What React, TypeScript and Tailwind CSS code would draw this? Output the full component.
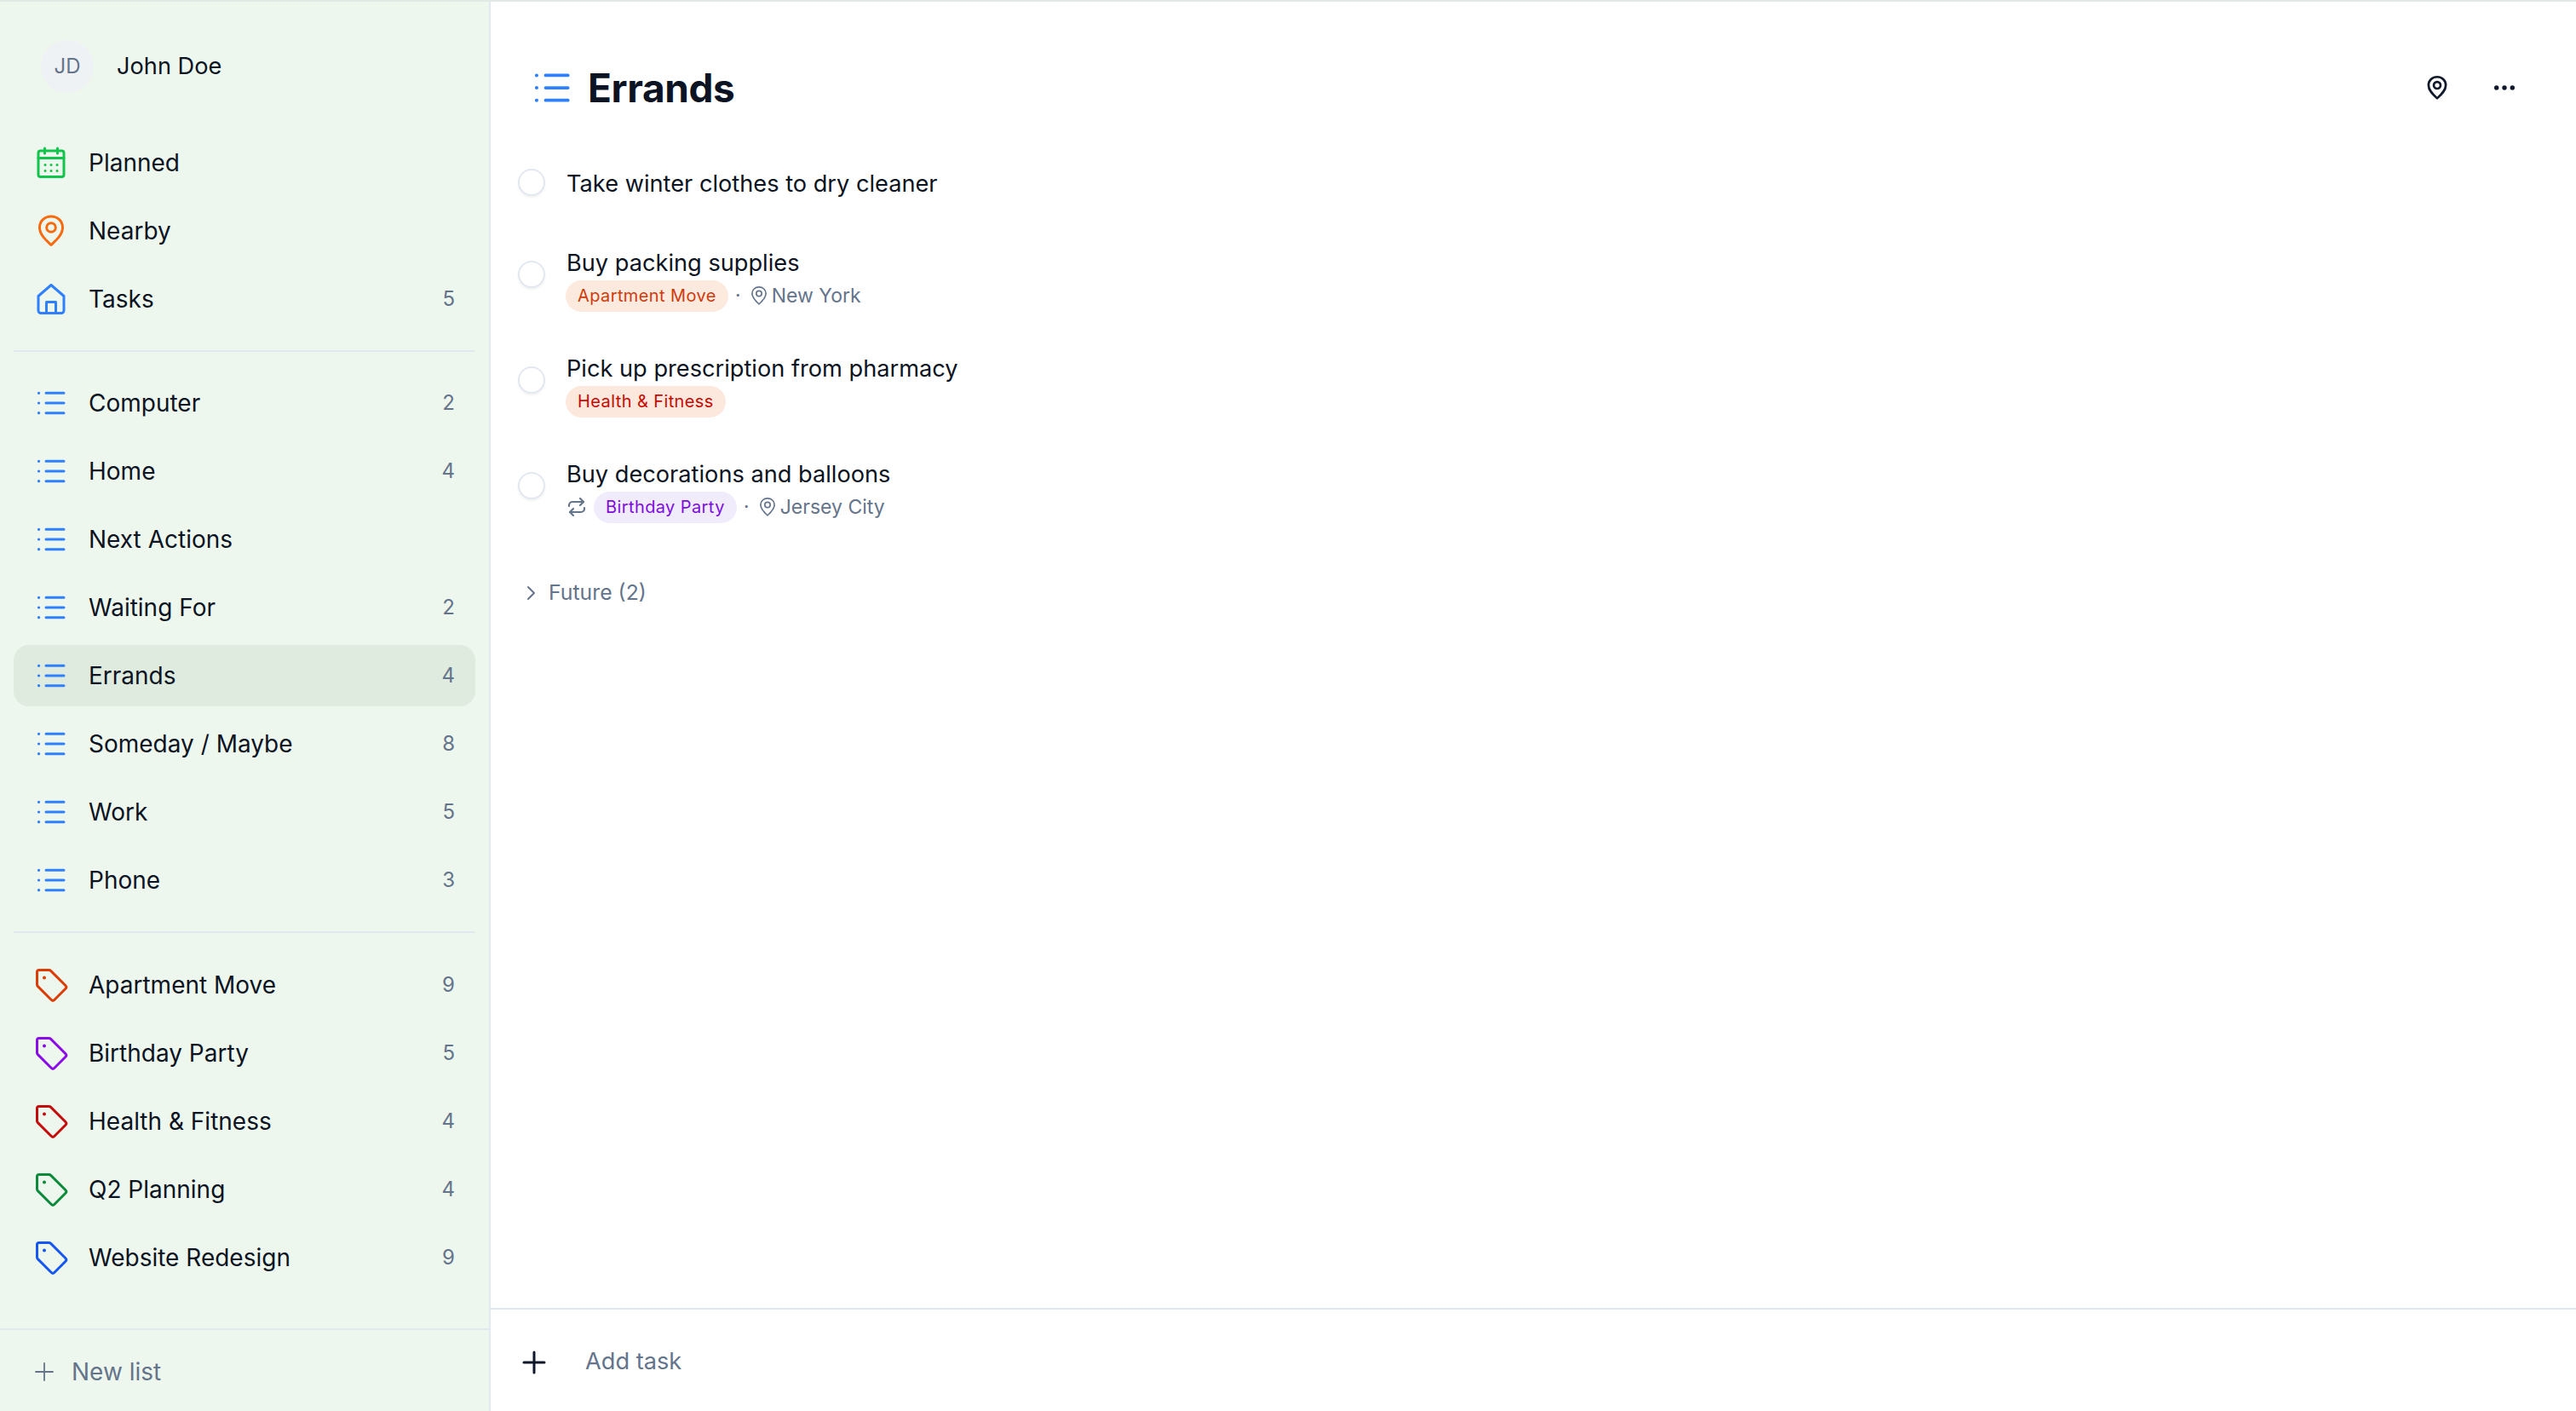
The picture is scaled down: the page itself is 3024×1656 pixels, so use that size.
import { ReactNode } from "react"

const font = "font-['Inter',sans-serif]"

const ListIcon = ({ className = "w-10 h-10" }: { className?: string }) => (
  <svg viewBox="0 0 40 40" className={`${className} shrink-0`} fill="none" stroke="#2f80ff" strokeLinecap="round">
    <path d="M14 8.300H35M14 20H35M14 31.700H35" strokeWidth="3" />
    <path d="M5.500 8.300h.1M5.500 20h.1M5.500 31.700h.1" strokeWidth="3.200" />
  </svg>
)

const CalendarIcon = () => (
  <svg viewBox="0 0 40 40" className="w-10 h-10 shrink-0" fill="none" stroke="#10c44c" strokeWidth="3" strokeLinecap="round" strokeLinejoin="round">
    <rect x="5" y="6" width="30" height="30.500" rx="2.500" />
    <path d="M5 14.500h30M12.500 3v6M27.500 3v6" />
    <path d="M13 22.500h.1M20 22.500h.1M27 22.500h.1M13 29.500h.1M20 29.500h.1M27 29.500h.1" strokeWidth="3" />
  </svg>
)

const PinIcon = ({ color = "#f86a0f", className = "w-10 h-10", width = 3 }: { color?: string; className?: string; width?: number }) => (
  <svg viewBox="0 0 40 40" className={`${className} shrink-0`} fill="none" stroke={color} strokeWidth={width} strokeLinejoin="round">
    <path d="M20 36.500C14 31 6.500 24.500 6.500 16 6.500 8.500 12.500 3 20 3S33.500 8.500 33.500 16C33.500 24.500 26 31 20 36.500Z" />
    <circle cx="20" cy="16" r="5.300" />
  </svg>
)

const HomeIcon = () => (
  <svg viewBox="0 0 40 40" className="w-10 h-10 shrink-0" fill="none" stroke="#2f80ff" strokeWidth="3" strokeLinejoin="round">
    <path d="M20 3.500 5 16.500V33.500A3 3 0 0 0 8 36.500H32A3 3 0 0 0 35 33.500V16.500Z" />
    <path d="M14.500 36.500V23.500H25.500V36.500" />
  </svg>
)

const TagIcon = ({ color }: { color: string }) => (
  <svg viewBox="0 0 40 40" className="w-10 h-10 shrink-0" fill="none" stroke={color} strokeWidth="3" strokeLinejoin="round">
    <path d="M3.500 4.800A2.300 2.300 0 0 1 5.800 2.500H17.500A3 3 0 0 1 19.600 3.400L37 20.800A2.500 2.500 0 0 1 37 24.300L23.800 37.500A2.500 2.500 0 0 1 20.300 37.500L4.400 21.600A3 3 0 0 1 3.500 19.500Z" />
    <circle cx="12" cy="11.500" r="2" fill={color} stroke="none" />
  </svg>
)

const Row = ({ icon, label, count, active }: { icon: ReactNode; label: string; count?: number; active?: boolean }) => (
  <div className={`flex items-center h-[72px] pl-6 pr-6 rounded-[18px] ${active ? "bg-[#deebde]" : ""}`}>
    {icon}
    <span className="ml-6 text-[28px] text-[#0c1322]">{label}</span>
    {count !== undefined && <span className="ml-auto text-[24px] text-[#64748b]">{count}</span>}
  </div>
)

const Pill = ({ label, bg, fg }: { label: string; bg: string; fg: string }) => (
  <span className={`inline-flex items-center h-[37px] px-[14px] rounded-full text-[20px] tracking-[0.4px] ${bg} ${fg}`}>{label}</span>
)

const Place = ({ name }: { name: string }) => (
  <>
    <span className="ml-[8px] mr-[9px] text-[24px] text-[#64748b]">·</span>
    <PinIcon color="#64748b" className="w-6 h-6" width={2.800} />
    <span className="ml-[3px] text-[23px] text-[#64748b]">{name}</span>
  </>
)

const Task = ({ title, meta }: { title: string; meta?: ReactNode }) => (
  <div className={`flex items-center pl-[32px] ${meta ? "h-[124px]" : "h-[92px]"}`}>
    <span className="w-8 h-8 rounded-full border-2 border-[#e2e8f0] bg-white shadow-[0_2px_3px_rgba(15,23,42,0.06)] shrink-0" />
    <div className={`ml-[25px] flex flex-col ${meta ? "pt-[12px]" : "pt-[4px]"}`}>
      <span className="text-[27.200px] leading-[38px] text-[#0c1322]">{title}</span>
      {meta && <div className="flex items-center h-[38px] -ml-[1px]">{meta}</div>}
    </div>
  </div>
)

export default function App() {
  return (
    <div className={`${font} w-[3024px] h-[1656px] flex flex-col bg-white overflow-hidden`}>
      <div className="h-[2px] bg-[#e2e8e4] shrink-0" />
      <div className="flex flex-1 min-h-0">
        {/* Sidebar */}
        <aside className="w-[576px] shrink-0 flex flex-col bg-[#eef7ee] border-r-2 border-[#e2e8f0]">
          <div className="flex items-center h-[153px] pl-[48px] pb-[1px] shrink-0">
            <span className="w-[62px] h-[62px] rounded-full bg-[#eff2f5] flex items-center justify-center text-[24px] text-[#64748b]">JD</span>
            <span className="ml-[27px] text-[27.200px] text-[#0c1322]">John Doe</span>
          </div>
          <div className="px-4 flex flex-col gap-2 flex-1">
            <Row icon={<CalendarIcon />} label="Planned" />
            <Row icon={<PinIcon />} label="Nearby" />
            <Row icon={<HomeIcon />} label="Tasks" count={5} />
            <div className="h-[2px] bg-[#e2e8f0] my-4" />
            <Row icon={<ListIcon />} label="Computer" count={2} />
            <Row icon={<ListIcon />} label="Home" count={4} />
            <Row icon={<ListIcon />} label="Next Actions" />
            <Row icon={<ListIcon />} label="Waiting For" count={2} />
            <Row icon={<ListIcon />} label="Errands" count={4} active />
            <Row icon={<ListIcon />} label="Someday / Maybe" count={8} />
            <Row icon={<ListIcon />} label="Work" count={5} />
            <Row icon={<ListIcon />} label="Phone" count={3} />
            <div className="h-[2px] bg-[#e2e8f0] mt-4 mb-[17px]" />
            <Row icon={<TagIcon color="#db3d05" />} label="Apartment Move" count={9} />
            <Row icon={<TagIcon color="#8b0be8" />} label="Birthday Party" count={5} />
            <Row icon={<TagIcon color="#c40c0c" />} label="Health & Fitness" count={4} />
            <Row icon={<TagIcon color="#0a8a3a" />} label="Q2 Planning" count={4} />
            <Row icon={<TagIcon color="#1557f0" />} label="Website Redesign" count={9} />
          </div>
          <div className="h-[97px] shrink-0 border-t-2 border-[#e2e8f0] flex items-center pl-[40px] pt-[2px]">
            <svg viewBox="0 0 24 24" className="w-6 h-6" fill="none" stroke="#64748b" strokeWidth="1.800" strokeLinecap="round">
              <path d="M12 2v20M2 12h20" />
            </svg>
            <span className="ml-[20px] text-[28px] text-[#64748b]">New list</span>
          </div>
        </aside>

        {/* Main */}
        <main className="flex-1 flex flex-col min-w-0">
          <header className="h-[166px] shrink-0 flex items-center pl-[47px] pr-[72px] pt-[36px]">
            <ListIcon className="w-[50px] h-[50px]" />
            <h1 className="ml-[17px] text-[46px] font-bold tracking-[-0.4px] text-[#0c1322]">Errands</h1>
            <div className="ml-auto flex items-center gap-[52px]">
              <PinIcon color="#0f172a" className="w-[30px] h-[30px]" width={3.600} />
              <svg viewBox="0 0 24 8" className="w-6 h-2" fill="#0f172a">
                <circle cx="2.700" cy="4" r="2.700" />
                <circle cx="12" cy="4" r="2.700" />
                <circle cx="21.300" cy="4" r="2.700" />
              </svg>
            </div>
          </header>
          <div className="flex-1 min-h-0">
            <Task title="Take winter clothes to dry cleaner" />
            <Task
              title="Buy packing supplies"
              meta={
                <>
                  <Pill label="Apartment Move" bg="bg-[#fdeadf]" fg="text-[#cf3a0b]" />
                  <Place name="New York" />
                </>
              }
            />
            <Task title="Pick up prescription from pharmacy" meta={<Pill label="Health & Fitness" bg="bg-[#fde8de]" fg="text-[#c70a00]" />} />
            <Task
              title="Buy decorations and balloons"
              meta={
                <>
                  <svg viewBox="0 0 24 24" className="w-6 h-6 mr-[8px] ml-[1px]" fill="none" stroke="#64748b" strokeWidth="2.200" strokeLinecap="round" strokeLinejoin="round">
                    <path d="M16 2l4 4-4 4" />
                    <path d="M20 6H7a4 4 0 0 0-4 4v1" />
                    <path d="M8 22l-4-4 4-4" />
                    <path d="M4 18h13a4 4 0 0 0 4-4v-1" />
                  </svg>
                  <Pill label="Birthday Party" bg="bg-[#f0ecfb]" fg="text-[#7e0ce0]" />
                  <Place name="Jersey City" />
                </>
              }
            />
            <div className="flex items-center mt-[34px] h-[60px] pl-[40px]">
              <svg viewBox="0 0 16 20" className="w-4 h-5" fill="none" stroke="#64748b" strokeWidth="2" strokeLinecap="round" strokeLinejoin="round">
                <path d="M4 3l7 7-7 7" />
              </svg>
              <span className="ml-[12px] text-[24.800px] text-[#64748b]">Future (2)</span>
            </div>
          </div>
          <footer className="h-[121px] shrink-0 border-t-2 border-[#e2e8f0] flex items-center pl-[37px] pt-[4px]">
            <svg viewBox="0 0 28 28" className="w-7 h-7" fill="none" stroke="#0f172a" strokeWidth="3" strokeLinecap="round">
              <path d="M14 2v24M2 14h24" />
            </svg>
            <span className="ml-[46px] text-[27.200px] text-[#64748b]">Add task</span>
          </footer>
        </main>
      </div>
    </div>
  )
}
